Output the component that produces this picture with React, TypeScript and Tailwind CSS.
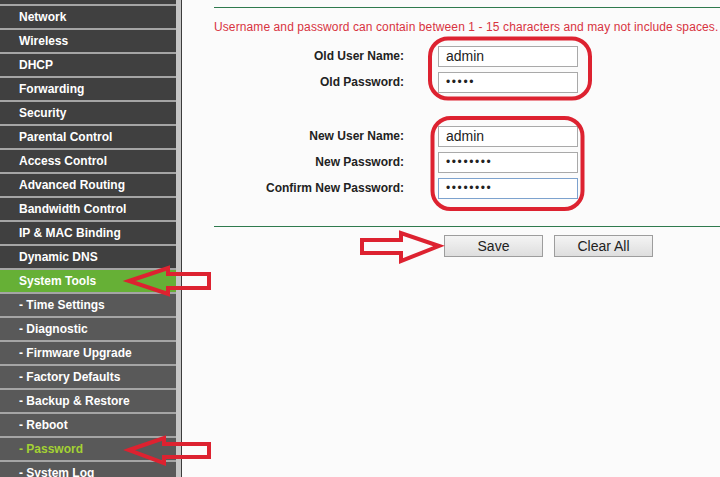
const menu: { label: string; sub?: boolean; active?: boolean; current?: boolean }[] = [
  { label: "Network" },
  { label: "Wireless" },
  { label: "DHCP" },
  { label: "Forwarding" },
  { label: "Security" },
  { label: "Parental Control" },
  { label: "Access Control" },
  { label: "Advanced Routing" },
  { label: "Bandwidth Control" },
  { label: "IP & MAC Binding" },
  { label: "Dynamic DNS" },
  { label: "System Tools", active: true },
  { label: "- Time Settings", sub: true },
  { label: "- Diagnostic", sub: true },
  { label: "- Firmware Upgrade", sub: true },
  { label: "- Factory Defaults", sub: true },
  { label: "- Backup & Restore", sub: true },
  { label: "- Reboot", sub: true },
  { label: "- Password", sub: true, current: true },
  { label: "- System Log", sub: true },
];

function Field({ label, value, dots, focused }: { label: string; value: string; dots?: boolean; focused?: boolean }) {
  return (
    <div className="flex items-center h-[22px]">
      <div className="w-[190px] text-right text-[12px] font-bold text-[#222]">{label}</div>
      <div
        className={
          "ml-[34px] w-[140px] h-[21px] bg-white border flex items-center px-[7px] " +
          (focused ? "border-[#7da2ce]" : "border-[#a9a9a9]")
        }
      >
        {dots ? (
          <span className="text-[12px] tracking-[1.6px] text-[#222] leading-none">{value}</span>
        ) : (
          <span className="text-[14px] text-[#222] leading-none">{value}</span>
        )}
      </div>
    </div>
  );
}

function Button({ children }: { children: string }) {
  return (
    <button className="w-[99px] h-[22px] border border-[#9d9d9d] bg-gradient-to-b from-[#f4f4f4] to-[#dedede] text-[14px] text-[#222] leading-none">
      {children}
    </button>
  );
}

export default function App() {
  return (
    <div
      className="relative w-[720px] h-[477px] overflow-hidden flex bg-[#fbfbfb]"
      style={{ fontFamily: '"Liberation Sans", Arial, sans-serif' }}
    >
      {/* sidebar */}
      <div className="w-[176px] shrink-0 flex flex-col">
        <div className="h-[4px] shrink-0 bg-[#404040]" />
        {menu.map((m) => (
          <div
            key={m.label}
            className={
              "h-[24px] shrink-0 border-t-2 border-[#a5a5a5] flex items-center pl-[19px] text-[12px] font-bold " +
              (m.active ? "bg-[#66b036] text-white" : m.sub ? "bg-[#595959]" : "bg-[#404040] text-white") +
              (m.current ? " text-[#a4d233]" : m.sub ? " text-white" : "")
            }
          >
            {m.label}
          </div>
        ))}
      </div>
      <div className="w-[5px] shrink-0 bg-[#c6c6c6]" />
      <div className="w-px shrink-0 bg-[#3c3c3c]" />

      {/* content */}
      <div className="flex-1 pl-[32px] flex flex-col">
        <div className="mt-[7px] h-px bg-[#2f7a4e]" />
        <p className="mt-[12px] text-[12px] leading-[14px] tracking-[0.1px] text-[#d8333f] whitespace-nowrap">
          Username and password can contain between 1 - 15 characters and may not include spaces.
        </p>
        <div className="mt-[11px] flex flex-col gap-[4px]">
          <Field label="Old User Name:" value="admin" />
          <Field label="Old Password:" value="•••••" dots />
        </div>
        <div className="mt-[32px] flex flex-col gap-[4px]">
          <Field label="New User Name:" value="admin" />
          <Field label="New Password:" value="••••••••" dots />
          <Field label="Confirm New Password:" value="••••••••" dots focused />
        </div>
        <div className="mt-[27px] h-px bg-[#2f7a4e]" />
        <div className="mt-[8px] ml-[230px] flex gap-[11px]">
          <Button>Save</Button>
          <Button>Clear All</Button>
        </div>
      </div>

      {/* annotations */}
      <svg className="absolute inset-0 pointer-events-none" width="720" height="477" viewBox="0 0 720 477">
        <g fill="none" stroke="#dd2230" strokeWidth="4" strokeLinejoin="miter">
          <rect x="430" y="38.5" width="160" height="60" rx="18" />
          <rect x="432.5" y="118" width="150" height="91" rx="18" />
          <polygon points="129,281 168,268 168,274 209,274 209,288 168,288 168,294" />
          <polygon points="129,450 164,438 164,444 209,444 209,457 164,457 164,463" />
          <polygon points="439,246 401,233 401,240 362,240 362,253 401,253 401,261" />
        </g>
      </svg>
    </div>
  );
}
